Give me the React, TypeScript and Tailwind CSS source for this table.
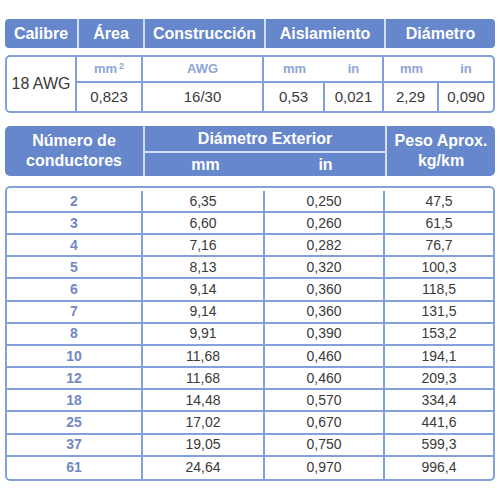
import React from "react";

const BLUE = "bg-[#6787cc]";

const rows: [string, string, string, string][] = [
  ["2", "6,35", "0,250", "47,5"],
  ["3", "6,60", "0,260", "61,5"],
  ["4", "7,16", "0,282", "76,7"],
  ["5", "8,13", "0,320", "100,3"],
  ["6", "9,14", "0,360", "118,5"],
  ["7", "9,14", "0,360", "131,5"],
  ["8", "9,91", "0,390", "153,2"],
  ["10", "11,68", "0,460", "194,1"],
  ["12", "11,68", "0,460", "209,3"],
  ["18", "14,48", "0,570", "334,4"],
  ["25", "17,02", "0,670", "441,6"],
  ["37", "19,05", "0,750", "599,3"],
  ["61", "24,64", "0,970", "996,4"],
];

export default function App() {
  return (
    <div
      className="w-[500px] h-[500px] bg-white pt-[19px] px-[5px]"
      style={{ fontFamily: '"Liberation Sans", Arial, sans-serif' }}
    >
      {/* Header 1 */}
      <div className={`flex h-[29px] rounded-[4px] ${BLUE} text-white font-bold text-[16px] overflow-hidden`}>
        <div className="w-[72px] flex items-center justify-center">Calibre</div>
        <div className="w-[66px] flex items-center justify-center border-l-2 border-[#d3ddf2]">Área</div>
        <div className="w-[121px] flex items-center justify-center border-l-2 border-[#d3ddf2]">Construcción</div>
        <div className="w-[120px] flex items-center justify-center border-l-2 border-[#d3ddf2]">Aislamiento</div>
        <div className="flex-1 flex items-center justify-center border-l-2 border-[#d3ddf2]">Diámetro</div>
      </div>

      {/* Box 2 */}
      <div className="mt-[7px] h-[58px] flex border-2 border-[#84a0db] rounded-[5px] text-[#3a3a3a]">
        <div className="w-[70px] flex items-center justify-center text-[16px] border-r-2 border-[#84a0db]">18 AWG</div>
        <div className="w-[66px] flex flex-col border-r-2 border-[#84a0db]">
          <div className="h-[26px] flex items-center justify-center border-b-2 border-[#84a0db] text-[13px] font-bold text-[#8fa4d6]">
            <span>mm<sup className="text-[9px] ml-[2px] -top-[4px]">2</sup></span>
          </div>
          <div className="flex-1 flex items-center justify-center text-[15px]">0,823</div>
        </div>
        <div className="w-[121px] flex flex-col border-r-2 border-[#84a0db]">
          <div className="h-[26px] flex items-center justify-center border-b-2 border-[#84a0db] text-[13px] font-bold text-[#8fa4d6]">AWG</div>
          <div className="flex-1 flex items-center justify-center text-[15px]">16/30</div>
        </div>
        <div className="w-[120px] flex flex-col border-r-2 border-[#84a0db]">
          <div className="h-[26px] flex border-b-2 border-[#84a0db] text-[13px] font-bold text-[#8fa4d6]">
            <div className="w-[61px] flex items-center justify-center">mm</div>
            <div className="flex-1 flex items-center justify-center">in</div>
          </div>
          <div className="flex-1 flex text-[15px]">
            <div className="w-[61px] flex items-center justify-center border-r-2 border-[#84a0db]">0,53</div>
            <div className="flex-1 flex items-center justify-center">0,021</div>
          </div>
        </div>
        <div className="flex-1 flex flex-col">
          <div className="h-[26px] flex border-b-2 border-[#84a0db] text-[13px] font-bold text-[#8fa4d6]">
            <div className="w-[55px] flex items-center justify-center">mm</div>
            <div className="flex-1 flex items-center justify-center">in</div>
          </div>
          <div className="flex-1 flex text-[15px]">
            <div className="w-[55px] flex items-center justify-center border-r-2 border-[#84a0db]">2,29</div>
            <div className="flex-1 flex items-center justify-center">0,090</div>
          </div>
        </div>
      </div>

      {/* Header 2 */}
      <div className={`mt-[13px] h-[50px] flex rounded-[5px] ${BLUE} text-white font-bold text-[16px] leading-[20px] overflow-hidden`}>
        <div className="w-[138px] flex flex-col items-center justify-center">
          <div>Número de</div>
          <div>conductores</div>
        </div>
        <div className="w-[242px] flex flex-col border-l-2 border-[#d3ddf2]">
          <div className="h-[27px] flex items-center justify-center pt-[1px] border-b-2 border-[#d3ddf2]">Diámetro Exterior</div>
          <div className="flex-1 flex">
            <div className="w-[121px] flex items-center justify-center">mm</div>
            <div className="flex-1 flex items-center justify-center">in</div>
          </div>
        </div>
        <div className="flex-1 flex flex-col items-center justify-center border-l-2 border-[#d3ddf2]">
          <div>Peso Aprox.</div>
          <div>kg/km</div>
        </div>
      </div>

      {/* Body */}
      <div className="mt-[10px] border-2 border-[#84a0db] rounded-[5px] text-[14px] text-[#3a3a3a] overflow-hidden">
        {rows.map((r, i) => (
          <div
            key={r[0]}
            className={`flex ${i === 0 ? "h-[25px] pt-[3px]" : "h-[22.17px]"} ${i < rows.length - 1 ? "border-b-2 border-[#84a0db]" : ""}`}
          >
            <div className="w-[136px] flex items-center justify-center font-bold text-[#7389c4] border-r-2 border-[#84a0db]">{r[0]}</div>
            <div className="w-[122px] flex items-center justify-center border-r-2 border-[#84a0db]">{r[1]}</div>
            <div className="w-[120px] flex items-center justify-center border-r-2 border-[#84a0db]">{r[2]}</div>
            <div className="flex-1 flex items-center justify-center">{r[3]}</div>
          </div>
        ))}
      </div>
    </div>
  );
}
